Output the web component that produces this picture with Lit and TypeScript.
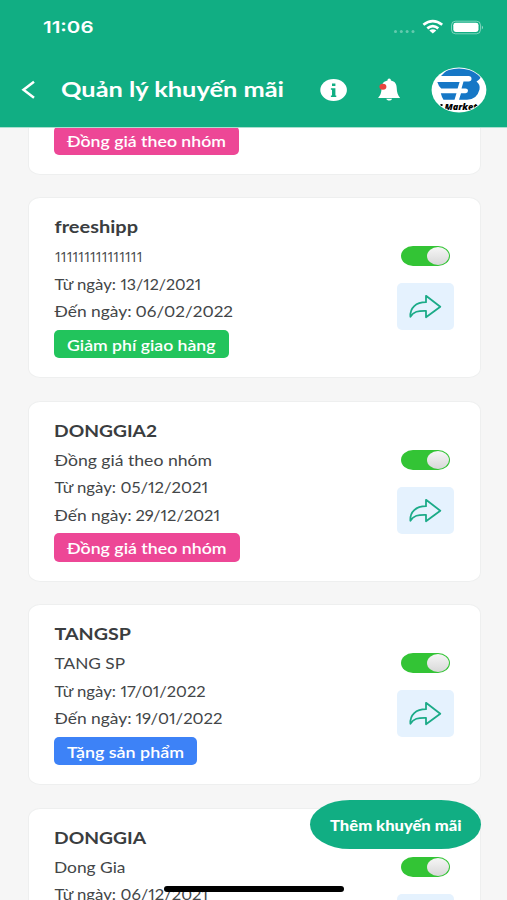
import { LitElement, html, svg, css } from "lit";
import { customElement, property } from "lit/decorators.js";

/** A piece of text: where it starts on its line and how wide it is set. */
type Run = [text: string, x: number, width: number];

/** One line of text; every run is fitted to its measure. */
@customElement("fit-text")
class FitText extends LitElement {
  @property({ attribute: false }) runs: Run[] = [];
  @property({ type: Number }) baseline = 16;
  @property() adjust = "spacingAndGlyphs";
  static styles = css`
    :host { display: block; }
    svg { display: block; width: 100%; height: 100%; overflow: visible; }
    text { fill: currentColor; }
  `;
  render() {
    return html`<svg>${this.runs.map(r => svg`<text x=${r[1]} y=${this.baseline} textLength=${r[2]} lengthAdjust=${this.adjust}>${r[0]}</text>`)}</svg>`;
  }
}

interface Promo {
  title: Run;
  note: Run;
  from: [date: string, width: number];
  to: [date: string, width: number];
  tag: Run;
  kind: string;
  digits?: boolean;
}

const promos: Promo[] = [
  { title: ["DONGGIA3", 0, 102], note: ["Đồng giá theo nhóm", 0, 157.5], from: ["05/12/2021", 87], to: ["29/12/2021", 84], tag: ["Đồng giá theo nhóm", 0, 159], kind: "pink" },
  { title: ["freeshipp", 0.5, 83.5], note: ["111111111111111", 0, 90], from: ["13/12/2021", 80.5], to: ["06/02/2022", 97.5], tag: ["Giảm phí giao hàng", 0, 148.5], kind: "green", digits: true },
  { title: ["DONGGIA2", 0, 103], note: ["Đồng giá theo nhóm", 0.5, 157.5], from: ["05/12/2021", 87.5], to: ["29/12/2021", 84.5], tag: ["Đồng giá theo nhóm", 0, 159.5], kind: "pink" },
  { title: ["TANGSP", 0.5, 76.5], note: ["TANG SP", 0.5, 70.5], from: ["17/01/2022", 85], to: ["19/01/2022", 87], tag: ["Tặng sản phẩm", 0, 117], kind: "blue" },
  { title: ["DONGGIA", 0, 92], note: ["Dong Gia", 0, 71.5], from: ["06/12/2021", 87.5], to: ["29/12/2021", 84.5], tag: ["Đồng giá theo nhóm", 0, 159.5], kind: "pink" },
];

@customElement("promo-card")
class PromoCard extends LitElement {
  @property({ attribute: false }) promo!: Promo;
  static styles = css`
    :host { display: flex; justify-content: space-between; box-sizing: border-box; height: 181px; flex: none;
      padding: 19px 26px 0 25px; background: #fff; border: 1px solid #eeefef; border-radius: 12px / 10px;
      color: #434648; font: 15px Lato, "Noto Sans", sans-serif; font-variant-numeric: proportional-nums; }
    .text { display: flex; flex-direction: column; align-items: flex-start; }
    .title { height: 25px; font-weight: 700; font-size: 17px; color: #3a3d40; }
    .line { height: 27.67px; }
    .digits { font: 14.5px "Open Sans", sans-serif; }
    .tag { box-sizing: border-box; height: 28.5px; margin-top: 5px; padding: 0 13px; border-radius: 5px; color: #fff; font-weight: 600; }
    .pink { background: #ed4796; }
    .green { background: #22c45c; }
    .blue { background: #3d82f7; }
    .side { display: flex; flex-direction: column; align-items: center; padding-top: 29px; gap: 17px; width: 56.5px; }
    .toggle { display: flex; justify-content: flex-end; box-sizing: border-box; width: 49.5px; height: 20px; padding: 1px 1.5px; border-radius: 12px / 10px; background: #33c435; }
    .knob { width: 22px; height: 18px; border-radius: 50%; background: linear-gradient(#f6f6f6, #d8d8d8); }
    .share { width: 56.5px; height: 47px; border-radius: 5px; background: #e5f2fe; }
    .share svg { display: block; }
  `;
  render() {
    const p = this.promo;
    const from: Run[] = [["Từ ngày:", 0.5, 61.5], [p.from[0], 66.5, p.from[1]]];
    const to: Run[] = [["Đến ngày:", 0.5, 77], [p.to[0], 81.5, p.to[1]]];
    return html`
      <div class="text">
        <fit-text class="title" .runs=${[p.title]} .baseline=${16}></fit-text>
        <fit-text class="line ${p.digits ? "digits" : ""}" .runs=${[p.note]} .adjust=${p.digits ? "spacing" : "spacingAndGlyphs"} .baseline=${19.5}></fit-text>
        <fit-text class="line" .runs=${from} .baseline=${19.5}></fit-text>
        <fit-text class="line" .runs=${to} .baseline=${19.5}></fit-text>
        <div class="tag ${p.kind}"><fit-text style="width:${p.tag[2]}px;height:28px" .runs=${[p.tag]} .baseline=${20.5}></fit-text></div>
      </div>
      <div class="side">
        <div class="toggle"><div class="knob"></div></div>
        <div class="share"><svg width="56.5" height="47" viewBox="0 0 56.5 47" fill="none" stroke="#1cab88" stroke-width="1.8" stroke-linejoin="round">
          <path d="M29 12.8 L43.3 23.7 L29 34.2 V27.8 C21 27.6 16.5 28.6 13.4 33.8 C12.8 24.5 19 19.3 29 19.2 Z"/></svg></div>
      </div>`;
  }
}

@customElement("app-root")
class AppRoot extends LitElement {
  static styles = css`
    :host { display: flex; flex-direction: column; position: relative; width: 507px; height: 900px; overflow: hidden; background: #f6f6f6; font-family: Lato, "Noto Sans", sans-serif; }
    header { position: relative; z-index: 1; flex: none; height: 127px; background: #11ae83; color: #fff; border-bottom: 1px solid #a9dfcf; box-sizing: content-box; }
    .status { display: flex; justify-content: space-between; height: 52px; padding: 0 24px 0 43px; }
    .time { width: 51px; height: 45px; font: 600 16.5px Inter, sans-serif; }
    .bar { display: flex; align-items: center; height: 75px; padding: 0 20px 0 21px; }
    .heading { width: 223px; height: 45px; margin: 0 36px 0 25px; font-size: 21px; font-weight: 700; }
    .bell { margin-left: 28px; }
    .logo { margin-left: 28px; }
    .logo text { font: italic 800 8px "Open Sans", sans-serif; }
    .back, .info, .bell, .logo { flex: none; display: block; }
    main { display: flex; flex-direction: column; gap: 22.5px; margin-top: -134.5px; padding: 0 26.5px 0 28px; }
    .fab { position: absolute; z-index: 2; left: 309.5px; top: 800px; box-sizing: border-box; width: 171.5px; height: 49px; padding: 0 20px; border-radius: 40px / 24.5px; background: #11ae83; color: #fff; font-size: 14.5px; font-weight: 900; }
    .fab fit-text { height: 49px; }
    .home { position: absolute; z-index: 3; left: 164px; top: 886px; width: 180px; height: 5.5px; border-radius: 3px; background: #000; }
  `;
  render() {
    const time: Run[] = [["11:06", 0, 50.5]];
    const heading: Run[] = [["Quản lý khuyến mãi", 0, 223]];
    const add: Run[] = [["Thêm khuyến mãi", 0, 131.5]];
    return html`
      <header>
        <div class="status">
          <fit-text class="time" .runs=${time} .baseline=${33.3}></fit-text>
          <svg width="94" height="52" viewBox="389 0 94 52" fill="#fff">
            <g opacity=".35"><circle cx="395.5" cy="31.5" r="1.5"/><circle cx="401.3" cy="31.5" r="1.5"/><circle cx="407.1" cy="31.5" r="1.5"/><circle cx="413" cy="31.5" r="1.5"/></g>
            <path d="M432.8 33.5 L429.300 30.500 Q432.800 28 436.300 30.500Z"/>
            <path d="M427.300 28.400 Q432.800 24 438.300 28.400 M423.400 24.800 Q432.800 17.600 442.200 24.800" fill="none" stroke="#fff" stroke-width="2.700"/>
            <rect x="451.500" y="21.200" width="29" height="12.600" rx="4" fill="none" stroke="#fff" stroke-opacity=".45"/>
            <rect x="453.300" y="22.800" width="25.200" height="9.200" rx="2.400"/>
            <path d="M481.800 25.500 Q484.400 27.400 481.800 29.400Z" opacity=".5"/>
          </svg>
        </div>
        <div class="bar">
          <svg class="back" width="15" height="22" viewBox="0 0 15 22" fill="none" stroke="#fff" stroke-width="2.500"><path d="M13 2.700 L2.500 10.700 L13 18.700"/></svg>
          <fit-text class="heading" .runs=${heading} .baseline=${30}></fit-text>
          <svg class="info" width="28" height="24" viewBox="320 77.500 28 24"><ellipse cx="334.600" cy="89.500" rx="13.300" ry="11" fill="#fff"/>
            <path d="M333 83h3.400v2.500h-3.400z M331.900 87.800h4.500v7.200h.9v1.400h-5.400v-1.400h1.100v-5.800h-1.100z" fill="#11ae83"/></svg>
          <svg class="bell" width="28" height="24" viewBox="375.500 77.500 28 24"><path d="M389.700 78c1.100 0 1.700.7 1.700 2.100 4 .8 5.600 3.300 5.800 7.100 .2 4.800 1 7.300 3.400 10.200h-22c2.600-2.900 3.300-5.400 3.500-10.200 .2-3.800 1.900-6.300 5.900-7.100 0-1.400.6-2.100 1.700-2.100z M386.800 98.200h5.800c-.4 2.400-5.400 2.400-5.800 0z" fill="#fff"/><ellipse cx="383.400" cy="86.300" rx="3.500" ry="3" fill="#e8453f"/></svg>
          <svg class="logo" width="56" height="46" viewBox="431 66 56 46">
            <defs><clipPath id="c"><ellipse cx="459" cy="89" rx="26.600" ry="21.600"/></clipPath></defs>
            <ellipse cx="459" cy="89" rx="27.400" ry="22.400" fill="#fff"/>
            <g clip-path="url(#c)" fill="#1677c6">
              <path d="M441 75 L449 67 H476 Q482 70 481 75 Q480.500 78 476.500 80.500 Q480.500 83.500 479.500 88.500 Q477 98.600 467 98.700 H459 L461 92.200 H465.500 Q468 92 468 89.800 Q468 87.600 465.500 87.600 H461.500 L463.500 80.600 H468.500 Q471.500 80.400 471.500 77.800 Q471.500 75 468.500 75 Z"/>
              <path d="M437.300 81h22.300l-2 6.600h-16.400q-2.500-2-3.900-6.600z M440.800 92.200h15.700l-2 6.500h-11q-1.700-2.500-2.700-6.500z"/>
              <text x="444.500" y="108.600" fill="#000" textLength="33" lengthAdjust="spacingAndGlyphs">Market</text>
              <ellipse cx="441.500" cy="104" rx="1.300" ry="1" fill="#000"/>
            </g></svg>
        </div>
      </header>
      <main>${promos.map(p => html`<promo-card .promo=${p}></promo-card>`)}</main>
      <div class="fab"><fit-text .runs=${add} .baseline=${30.5}></fit-text></div>
      <div class="home"></div>`;
  }
}
